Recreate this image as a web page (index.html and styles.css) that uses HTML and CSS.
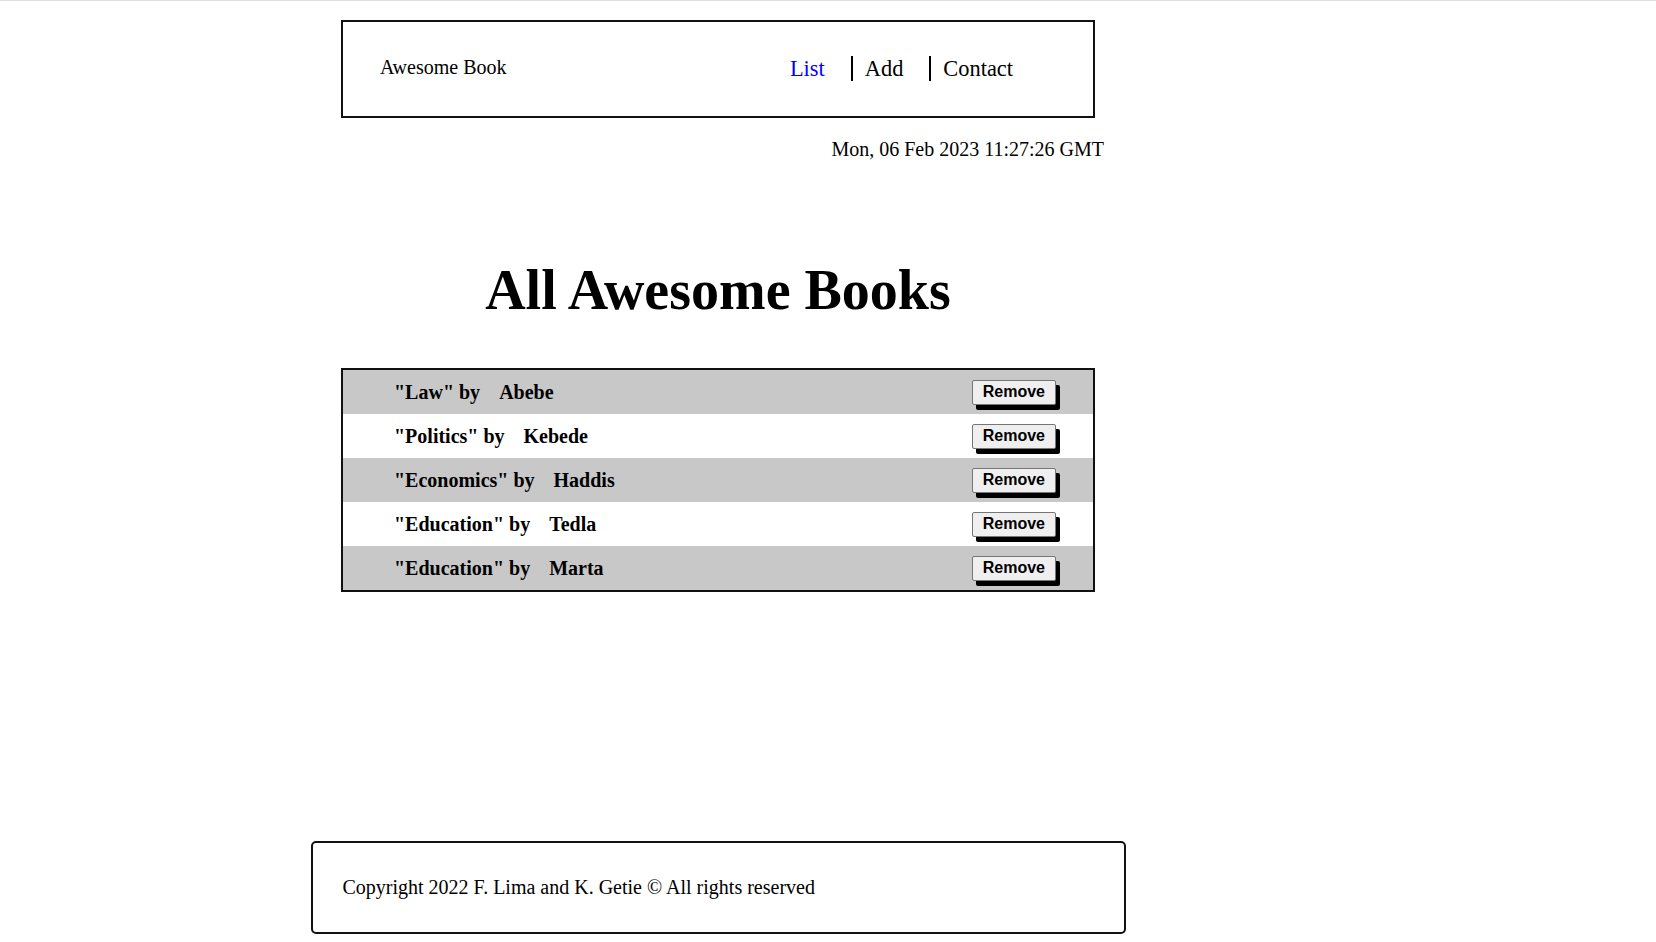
FILE: index.html
```html
<!DOCTYPE html>
<html lang="en">
<head>
<meta charset="utf-8">
<title>Awesome Books</title>
<link rel="stylesheet" href="styles.css">
</head>
<body>
<div class="page">
  <header class="topbar">
    <div class="brand">Awesome Book</div>
    <nav class="nav">
      <a class="nav-link active" href="#">List</a>
      <a class="nav-link sep" href="#">Add</a>
      <a class="nav-link sep" href="#">Contact</a>
    </nav>
  </header>
  <div class="date">Mon, 06 Feb 2023 11:27:26 GMT</div>
  <h1 class="title">All Awesome Books</h1>
  <ul class="books">
    <li class="book"><div class="info"><span>"Law" by</span><span>Abebe</span></div><button class="remove">Remove</button></li>
    <li class="book"><div class="info"><span>"Politics" by</span><span>Kebede</span></div><button class="remove">Remove</button></li>
    <li class="book"><div class="info"><span>"Economics" by</span><span>Haddis</span></div><button class="remove">Remove</button></li>
    <li class="book"><div class="info"><span>"Education" by</span><span>Tedla</span></div><button class="remove">Remove</button></li>
    <li class="book"><div class="info"><span>"Education" by</span><span>Marta</span></div><button class="remove">Remove</button></li>
  </ul>
  <footer class="footer">Copyright 2022 F. Lima and K. Getie © All rights reserved</footer>
</div>
</body>
</html>
```
FILE: styles.css
```css
* { box-sizing: border-box; }
html, body { margin: 0; padding: 0; }
body {
  font-family: "Liberation Serif", "Times New Roman", serif;
  color: #000;
  background: #fff;
  border-top: 1px solid #dedede;
}
.page {
  width: 1436px;
  display: flex;
  flex-direction: column;
  align-items: center;
  padding-top: 19px;
}
.topbar {
  width: 754px;
  border: 2px solid #111;
  display: flex;
  justify-content: space-between;
  align-items: center;
  padding: 34px 80px 35px 37px;
}
.brand { font-size: 20px; line-height: 23px; margin-top: -3px; }
.nav { display: flex; gap: 26px; }
.nav-link {
  font-size: 22.4px;
  line-height: 25px;
  color: #000;
  text-decoration: none;
}
.nav-link.active { color: #0000ff; }
.nav-link.sep { border-left: 2px solid #000; padding-left: 12px; }
.date {
  width: 772px;
  text-align: right;
  font-size: 20px;
  line-height: 22px;
  margin-top: 20px;
}
.title {
  font-size: 56px;
  font-weight: bold;
  line-height: 62px;
  margin: 99px 0 0;
}
.books {
  list-style: none;
  margin: 47px 0 0;
  padding: 0;
  width: 754px;
  border: 2px solid #111;
}
.book {
  height: 44px;
  display: flex;
  justify-content: space-between;
  align-items: center;
  padding: 0 37px 0 51px;
  background: #fff;
}
.book:nth-child(odd) { background: #c8c8c8; }
.info {
  display: flex;
  gap: 19px;
  font-size: 20px;
  font-weight: bold;
}
.remove {
  font-family: "Liberation Sans", Arial, sans-serif;
  font-size: 16px;
  font-weight: bold;
  line-height: 18px;
  padding: 2px 10px;
  height: 25px;
  color: #000;
  background: #efefef;
  border: 1px solid #767676;
  border-radius: 2px;
  box-shadow: 4px 5px 0 #000;
}
.footer {
  width: 815px;
  margin-top: 249px;
  border: 2px solid #111;
  border-radius: 5px;
  padding: 33px 30px 34px;
  font-size: 20px;
  line-height: 22px;
}
```
